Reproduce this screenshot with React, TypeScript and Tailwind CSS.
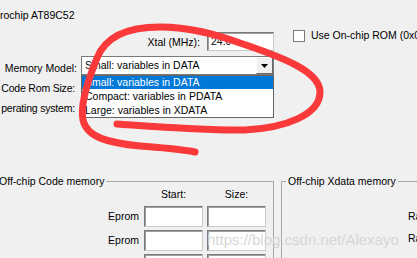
const sunken =
  "border border-t-[#7a7a7a] border-l-[#7a7a7a] border-r-[#c8c8c8] border-b-[#c8c8c8] shadow-[inset_1px_1px_0_#a0a0a0] bg-white";

function Field({ w, h, children }: { w: string; h: string; children?: React.ReactNode }) {
  return <div className={`${w} ${h} ${sunken} pl-[3px] flex items-center`}>{children}</div>;
}

function EpromRow() {
  return (
    <div className="flex items-center">
      <span className="mr-[5px]">Eprom</span>
      <div className={`h-[21px] w-[59px] ${sunken}`} />
      <div className={`ml-[4px] h-[21px] w-[59px] ${sunken}`} />
    </div>
  );
}

export default function App() {
  return (
    <div className="relative h-[258px] w-[417px] overflow-hidden bg-[#f0f0f0] font-['Liberation_Sans',Arial,sans-serif] text-[10.5px] leading-[13px] text-black">
      <div className="pt-[9px] whitespace-nowrap">rochip AT89C52</div>

      {/* xtal + on-chip rom */}
      <div className="mt-[7px] flex h-[22px] items-start">
        <div className="flex w-[274px] shrink-0 items-center justify-end pt-[3px]">
          <span className="mr-[7px] mt-[2px]">Xtal (MHz):</span>
          <Field w="w-[67px]" h="h-[19px]">24.0</Field>
        </div>
        <div className="ml-[19px] flex items-center whitespace-nowrap">
          <div className="h-[12px] w-[12px] border border-[#7a7a7a] bg-white" />
          <span className="ml-[6px]">Use On-chip ROM (0x0-0x1FFF)</span>
        </div>
      </div>

      {/* memory model */}
      <div className="mt-[5px] flex items-start">
        <span className="w-[77px] shrink-0 pt-[6px] text-right whitespace-nowrap">Memory Model:</span>
        <div className="ml-[4px] flex h-[19px] w-[193px] items-center border border-[#7a7a7a] bg-white">
          <span className="flex-1 pl-[3px] whitespace-nowrap">Small: variables in DATA</span>
          <div className="flex h-[17px] w-[17px] items-center justify-center border border-t-white border-l-white border-r-[#696969] border-b-[#696969] bg-[#f0f0f0]">
            <svg width="7" height="4" viewBox="0 0 7 4">
              <path d="M0 0h7L3.5 4z" fill="#000" />
            </svg>
          </div>
        </div>
      </div>
      <div className="mt-[7px] flex w-[75px] justify-end whitespace-nowrap tracking-[-0.2px]">Code Rom Size:</div>
      <div className="mt-[7px] flex w-[75px] justify-end whitespace-nowrap tracking-[-0.2px]">perating system:</div>

      {/* group boxes */}
      <div className="mt-[60px] flex">
        <fieldset className="-ml-[8px] h-[100px] w-[282px] shrink-0 border border-[#a9a9a9]">
          <legend className="ml-[4px] px-[2px] whitespace-nowrap">Off-chip Code memory</legend>
          <div className="flex flex-col items-end pr-[7px]">
            <div className="flex">
              <span className="w-[59px] text-center">Start:</span>
              <span className="ml-[4px] w-[59px] text-center">Size:</span>
            </div>
            <div className="mt-[5px] flex flex-col gap-[3px]">
              <EpromRow />
              <EpromRow />
              <EpromRow />
            </div>
          </div>
        </fieldset>
        <fieldset className="ml-[7px] h-[100px] w-[200px] shrink-0 border border-[#a9a9a9]">
          <legend className="ml-[4px] px-[2px] whitespace-nowrap">Off-chip Xdata memory</legend>
          <div className="pl-[126px]">
            <div className="mt-[22px]">Ram</div>
            <div className="mt-[9px]">Ram</div>
          </div>
        </fieldset>
      </div>

      {/* open dropdown list */}
      <div className="absolute left-[81px] top-[75px] w-[193px] border border-[#646464] bg-white whitespace-nowrap">
        <div className="h-[13px] bg-[#0078d7] pl-[3px] text-white">Small: variables in DATA</div>
        <div className="h-[14px] pl-[3px] leading-[14px]">Compact: variables in PDATA</div>
        <div className="h-[14px] pl-[3px] leading-[14px]">Large: variables in XDATA</div>
      </div>

      {/* watermark */}
      <div className="absolute left-[207px] top-[231px] whitespace-nowrap text-[15px] leading-[18px] text-[#d6d6d6]">
        https://blog.csdn.net/Alexayo
      </div>

      {/* red annotation */}
      <svg className="pointer-events-none absolute inset-0" width="417" height="258" viewBox="0 0 417 258">
        <path
          d="M117,124 C160,127 210,131 245,130 C285,128 320,115 320,92 C320,72 285,58 240,43 C215,34 190,27 160,27 C125,27 105,38 97,58 C88,80 80,105 83,120 C87,138 110,143 140,146 C165,148 180,149 195,152"
          fill="none"
          stroke="#fa3a3a"
          strokeWidth="7"
          strokeLinecap="round"
          strokeLinejoin="round"
        />
      </svg>
    </div>
  );
}
